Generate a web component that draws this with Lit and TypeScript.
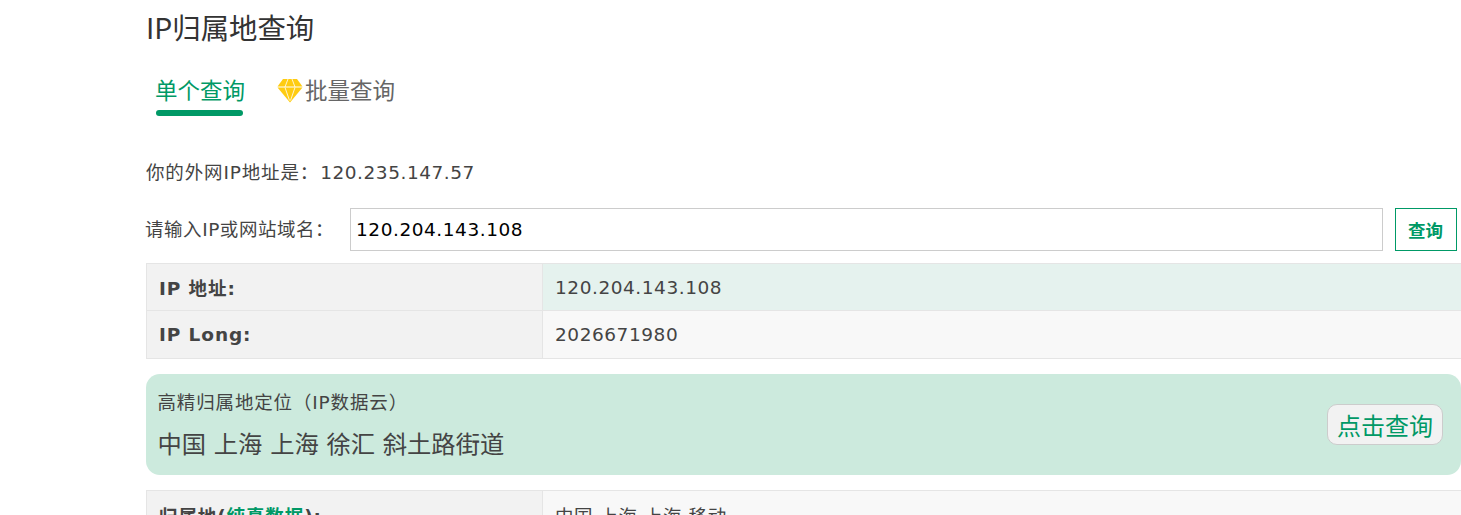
import { LitElement, html, css } from 'lit';
import { customElement } from 'lit/decorators.js';

@customElement('app-root')
export class AppRoot extends LitElement {
  static styles = css`
    :host {
      display: block;
      height: 515px;
      overflow: hidden;
      background: #fff;
      color: #444;
      font-family: "DejaVu Sans", "Noto Sans CJK SC", sans-serif;
      font-size: 18.5px;
      letter-spacing: 0.55px;
    }

    .page {
      padding-left: 146px;
      width: 1315px;
    }

    h1 {
      margin: 0;
      height: 56px;
      font: 400 28.4px/54px "Noto Sans CJK SC", sans-serif;
      letter-spacing: 0;
      color: #333;
    }

    .tabs {
      display: flex;
      gap: 32px;
      height: 60px;
      margin-top: 15px;
      padding-left: 9px;
      font: 400 22.5px/36px "Noto Sans CJK SC", sans-serif;
      letter-spacing: 0;
    }

    .tab {
      display: flex;
      align-items: flex-start;
      height: 60px;
      position: relative;
      color: #666;
    }

    .tab.active {
      color: #009966;
    }

    .tab.active::after {
      content: '';
      position: absolute;
      left: 1px;
      right: 2px;
      top: 39px;
      height: 6px;
      border-radius: 3px;
      background: #009966;
    }

    .tab svg {
      width: 26px;
      height: 24px;
      margin-top: 8px;
      margin-right: 2px;
    }

    .myip {
      margin-top: 25px;
      height: 34px;
      line-height: 34px;
      letter-spacing: 0.85px;
    }

    .myip span {
      margin-left: 1px;
      letter-spacing: 0.55px;
    }

    .search {
      display: flex;
      align-items: stretch;
      margin-top: 18px;
      height: 43px;
    }

    .search label {
      width: 204px;
      line-height: 43px;
      margin-left: -1px;
      margin-right: 1px;
    }

    .search .input {
      box-sizing: border-box;
      width: 1033px;
      border: 1px solid #ccc;
      padding-left: 5px;
      color: #000;
      line-height: 41px;
    }

    .search button {
      box-sizing: border-box;
      width: 62px;
      margin-left: 12px;
      border: 1px solid #009966;
      background: #fff;
      color: #009966;
      font: 700 17.5px "Noto Sans CJK SC", sans-serif;
      padding: 0 1px 1px 0;
    }

    table {
      border-collapse: collapse;
      width: 1330px;
      table-layout: fixed;
    }

    .info {
      margin-top: 12px;
    }

    td {
      border: 1px solid #e5e5e5;
      height: 47px;
      padding: 0 12px;
      box-sizing: border-box;
    }

    tr.even td {
      height: 48px;
    }

    td.key {
      width: 396px;
      background: #f2f2f2;
      font-weight: 700;
      letter-spacing: 0.9px;
    }

    tr.odd td.val {
      background: #e5f2ee;
    }

    tr.even td.val {
      background: #f8f8f8;
    }

    .banner {
      box-sizing: border-box;
      display: flex;
      align-items: center;
      justify-content: space-between;
      height: 101px;
      margin: 15px 0;
      padding: 0 18px 0 11.5px;
      border-radius: 14px;
      background: #cceadd;
    }

    .banner .title {
      line-height: 28px;
      letter-spacing: 0.85px;
      margin-top: 1px;
    }

    .banner .place {
      margin-top: 11px;
      font-size: 24.3px;
      line-height: 34px;
      letter-spacing: 0;
    }

    .banner button {
      box-sizing: border-box;
      width: 116px;
      height: 41px;
      border: 1px solid #ccc;
      border-radius: 10px;
      background: #f2f2f2;
      color: #009966;
      font: 400 24px "Noto Sans CJK SC", sans-serif;
      padding: 0;
    }

    .green {
      color: #009966;
    }
  `;

  private row(key: unknown, val: string, cls: string) {
    return html`<tr class=${cls}><td class="key">${key}</td><td class="val">${val}</td></tr>`;
  }

  render() {
    return html`
      <div class="page">
        <h1>IP归属地查询</h1>
        <div class="tabs">
          <div class="tab active">单个查询</div>
          <div class="tab">
            <svg viewBox="0 0 26 24">
              <path fill="#ffcc11" d="M6 0h14l5.500 7.500H.5z" />
              <path fill="#ffcc11" d="M.5 8.500h25L13 23.500z" />
              <path stroke="#fff" stroke-width="0.8" fill="none" d="M8 8l3-8M18 8l-3-8M8 8.500l4.500 13M18 8.500l-4.500 13" />
            </svg>
            批量查询
          </div>
        </div>
        <div class="myip">你的外网IP地址是：<span>120.235.147.57</span></div>
        <div class="search">
          <label>请输入IP或网站域名：</label>
          <div class="input">120.204.143.108</div>
          <button>查询</button>
        </div>
        <table class="info">
          ${this.row('IP 地址:', '120.204.143.108', 'odd')}
          ${this.row('IP Long:', '2026671980', 'even')}
        </table>
        <div class="banner">
          <div>
            <div class="title">高精归属地定位（IP数据云）</div>
            <div class="place">中国 上海 上海 徐汇 斜土路街道</div>
          </div>
          <button>点击查询</button>
        </div>
        <table>
          ${this.row(html`归属地(<span class="green">纯真数据</span>):`, '中国 上海 上海 移动', 'even')}
        </table>
      </div>
    `;
  }
}
